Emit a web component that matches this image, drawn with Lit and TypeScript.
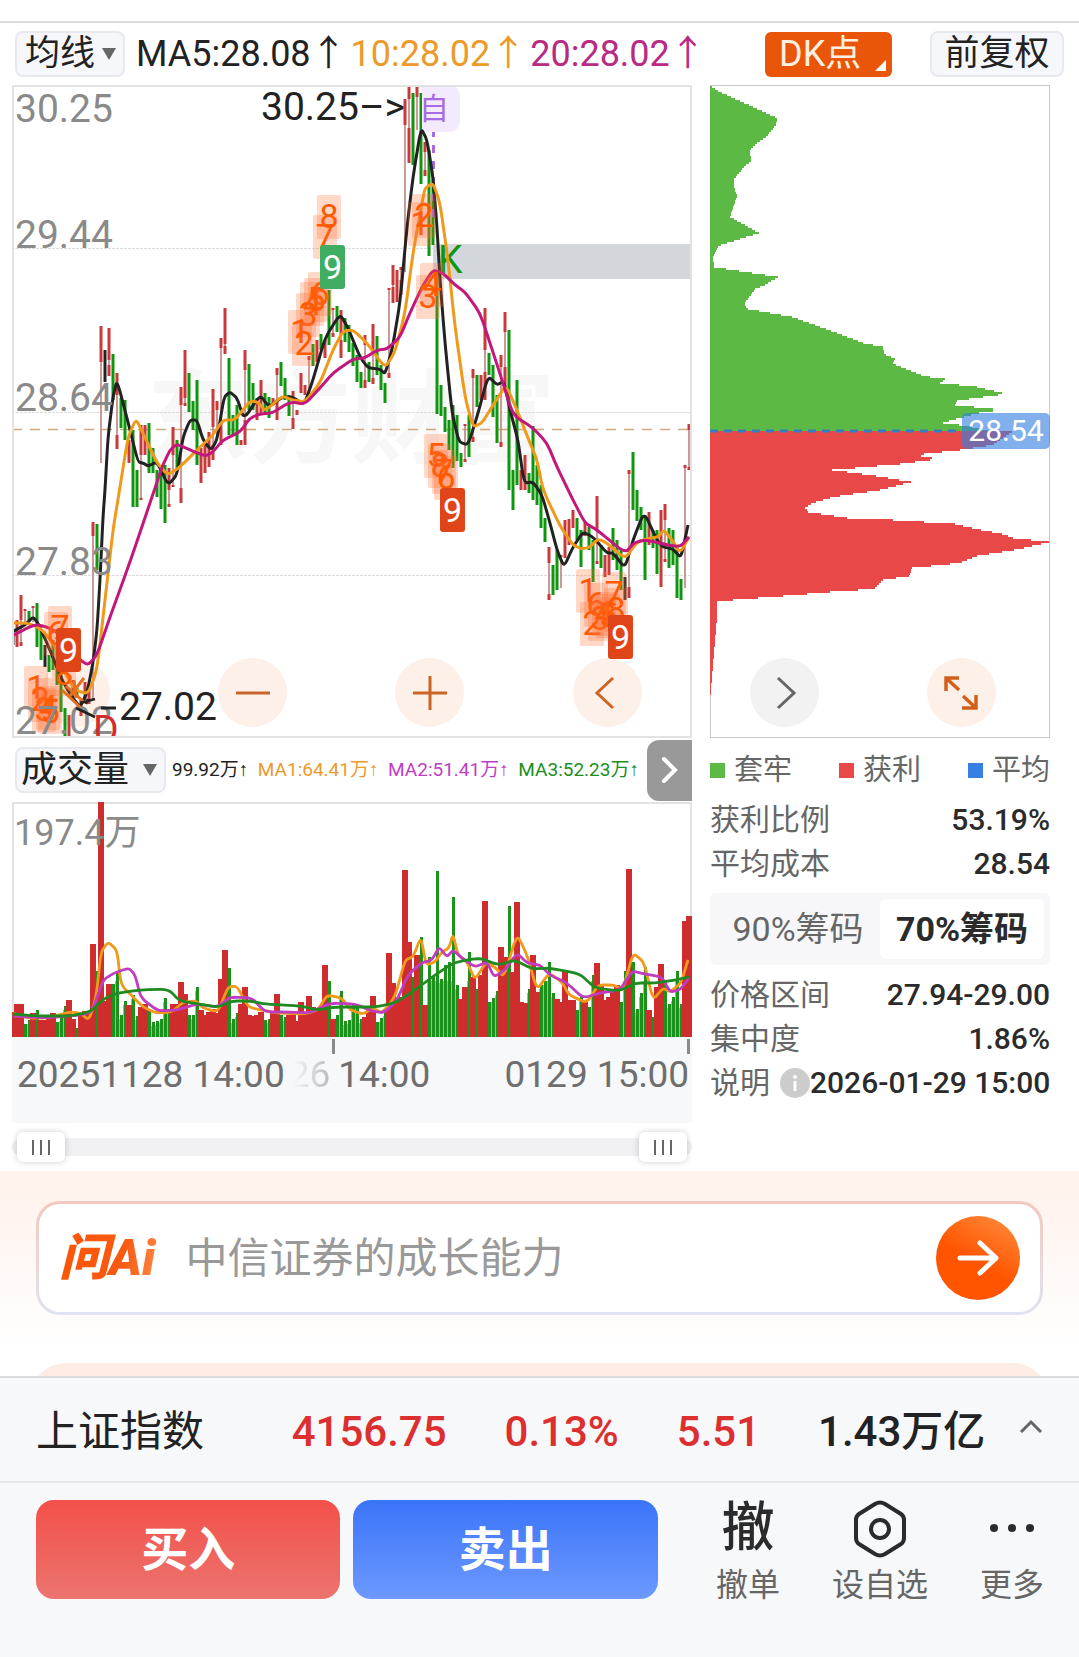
import { LitElement, html, svg, css } from "lit";
import { customElement, state } from "lit/decorators.js";

type Tone = "r" | "g" | "k";

/* x, body top, body bottom, tone, optional wick end, optional second body top */
const CANDLES: Array<[number, number, number, Tone, number?, number?]> = [
  [13, 630, 645, "k"], [17, 620, 647, "r"], [21, 595, 620, "r", 646, 642], [25, 609, 611, "r", 622],
  [29, 611, 620, "g"], [33, 606, 608, "r", 622], [37, 603, 647, "g"], [41, 630, 660, "g"],
  [45, 645, 667, "k"], [49, 655, 672, "g"], [53, 640, 670, "g"], [57, 650, 685, "g"],
  [61, 660, 712, "g"], [65, 708, 737, "g"], [69, 715, 738, "r"], [73, 680, 700, "r"], [77, 688, 696, "g"],
  [81, 700, 716, "r"], [85, 682, 700, "r"], [89, 690, 704, "r"], [93, 522, 536, "r", 700], [97, 524, 570, "g"],
  [101, 326, 362, "r", 463], [105, 350, 382, "k"], [109, 328, 360, "r", 376, 365], [113, 354, 400, "g"],
  [117, 373, 395, "r", 449, 435], [121, 398, 428, "g"], [125, 400, 440, "g"], [129, 440, 463, "r"],
  [133, 430, 507, "g"], [137, 470, 507, "g"], [141, 425, 455, "r", 500, 498], [145, 425, 455, "r"],
  [149, 423, 473, "g"], [153, 448, 473, "g"], [157, 470, 497, "g"], [161, 465, 509, "g"],
  [165, 465, 523, "g"], [169, 468, 490, "r", 507, 504], [173, 427, 455, "r", 487, 485], [177, 440, 470, "g"],
  [181, 387, 405, "r", 503, 488], [185, 350, 398, "r", 406, 403], [189, 373, 412, "g"], [193, 401, 430, "g"],
  [197, 380, 465, "g"], [201, 448, 483, "r"], [205, 445, 473, "r"], [209, 432, 467, "r"],
  [213, 389, 427, "r", 460, 445], [217, 401, 410, "r", 440], [221, 338, 348, "r", 445, 420],
  [225, 308, 344, "r", 354, 346], [229, 358, 435, "g"], [233, 415, 435, "g"], [237, 405, 445, "g"],
  [241, 440, 445, "r"], [245, 350, 370, "r", 445, 420], [249, 364, 410, "g"], [253, 383, 410, "g"],
  [257, 398, 420, "r"], [261, 380, 415, "r"], [265, 393, 415, "g"], [269, 397, 418, "g"],
  [273, 398, 405, "r"], [277, 368, 375, "r", 420, 400], [281, 362, 386, "g"], [285, 378, 400, "g"],
  [289, 395, 416, "g"], [293, 391, 400, "r", 429, 418], [297, 410, 415, "r"], [301, 373, 393, "r"],
  [305, 385, 395, "r"], [309, 356, 360, "r", 400], [313, 344, 366, "g"], [317, 340, 362, "r"],
  [321, 334, 350, "g"], [325, 340, 358, "r"], [329, 290, 345, "g"], [333, 308, 310, "r", 337, 333],
  [337, 306, 332, "g"], [341, 310, 335, "r", 358, 340], [345, 318, 342, "g"], [349, 325, 352, "g"],
  [353, 343, 366, "g"], [357, 355, 382, "g"], [361, 372, 388, "g"], [365, 335, 345, "r", 388, 380],
  [369, 362, 382, "g"], [373, 324, 352, "r", 384, 378], [377, 336, 375, "g"], [381, 365, 390, "g"],
  [385, 383, 403, "g"], [389, 288, 290, "r", 378, 373], [393, 265, 285, "r", 303, 287], [397, 270, 302, "r"],
  [401, 267, 270, "r", 295, 280], [405, 99, 125, "r", 272], [409, 85, 99, "r", 163, 128], [413, 93, 165, "g"],
  [417, 87, 97, "r", 130], [421, 93, 184, "g"], [425, 142, 152, "r", 176, 170], [429, 150, 256, "g"],
  [433, 180, 245, "g"], [437, 270, 414, "g"], [441, 385, 416, "g"], [445, 407, 432, "g"],
  [449, 420, 450, "g"], [453, 405, 468, "g"], [457, 415, 461, "g"], [461, 453, 467, "g"],
  [465, 424, 426, "r", 462, 459], [469, 415, 457, "g"], [473, 369, 378, "r", 442, 437], [477, 375, 407, "g"],
  [481, 375, 400, "r"], [485, 308, 350, "r", 400, 372], [489, 353, 375, "g"], [493, 365, 417, "g"],
  [497, 395, 443, "g"], [501, 355, 367, "r", 447, 442], [505, 312, 332, "r", 390, 367], [509, 330, 490, "g"],
  [513, 470, 510, "g"], [517, 380, 485, "g"], [521, 470, 490, "r"], [525, 455, 490, "r"],
  [529, 473, 493, "g"], [533, 426, 500, "g"], [537, 465, 505, "g"], [541, 485, 528, "g"],
  [545, 518, 542, "g"], [549, 547, 563, "r", 600, 594], [553, 565, 595, "g"], [557, 550, 590, "g"],
  [561, 555, 557, "r", 588], [565, 520, 558, "r"], [569, 519, 545, "r"], [573, 510, 528, "r"],
  [577, 518, 540, "g"], [581, 530, 567, "g"], [585, 522, 536, "r"], [589, 527, 550, "g"],
  [593, 540, 582, "g"], [597, 496, 530, "r", 564, 561], [601, 545, 568, "g"], [605, 555, 577, "r"],
  [609, 547, 575, "r"], [613, 528, 560, "g"], [617, 540, 570, "g"], [621, 550, 590, "g"],
  [625, 577, 600, "k"], [629, 470, 474, "r", 598, 587], [633, 452, 510, "g"], [637, 490, 521, "g"],
  [641, 507, 530, "g"], [645, 515, 580, "g"], [649, 512, 545, "r"], [653, 530, 548, "g"],
  [657, 530, 574, "g"], [661, 510, 587, "r"], [665, 504, 520, "r", 562, 559], [669, 528, 568, "g"],
  [673, 530, 565, "g"], [677, 545, 598, "g"], [681, 579, 600, "g"], [685, 465, 468, "r", 588],
  [689, 424, 430, "r", 470, 467],
];

const MA5: number[][] = [
  [12, 632], [25, 625], [33, 617], [38, 623], [50, 650], [62, 680], [72, 697], [80, 707], [87, 693], [93, 663],
  [97, 630], [100, 580], [103, 517], [105, 490], [108, 437], [113, 397], [117, 380], [128, 422], [138, 462],
  [143, 463], [148, 466], [157, 462], [168, 485], [177, 475], [183, 437], [190, 420], [197, 420], [203, 440],
  [211, 450], [217, 440], [224, 397], [230, 392], [237, 398], [244, 419], [260, 395], [269, 407], [282, 397],
  [293, 397], [304, 405], [313, 380], [325, 338], [340, 314], [348, 328], [360, 357], [368, 368], [380, 369],
  [385, 374], [392, 350], [400, 303], [407, 227], [413, 177], [421, 128], [427, 140], [433, 177], [437, 227],
  [440, 280], [445, 343], [452, 413], [459, 442], [468, 445], [477, 417], [488, 376], [497, 385], [504, 381],
  [510, 410], [518, 440], [524, 483], [533, 482], [542, 495], [550, 523], [557, 550], [564, 567], [573, 547],
  [583, 532], [593, 537], [607, 553], [613, 553], [625, 568], [633, 540], [644, 512], [657, 540], [663, 547],
  [673, 549], [681, 558], [688, 525],
];
const MA10: number[][] = [
  [12, 623], [27, 623], [40, 628], [55, 645], [62, 668], [75, 690], [88, 694], [97, 670], [105, 600], [113, 530],
  [120, 487], [128, 437], [136, 419], [143, 433], [157, 463], [168, 475], [180, 467], [197, 450], [213, 435],
  [223, 420], [235, 420], [250, 401], [258, 402], [265, 411], [282, 396], [293, 400], [305, 402], [320, 383],
  [333, 350], [343, 331], [353, 330], [367, 343], [385, 368], [395, 352], [405, 313], [413, 253], [422, 203],
  [425, 188], [433, 183], [440, 203], [448, 260], [455, 327], [465, 397], [473, 427], [482, 423], [495, 402],
  [506, 385], [517, 410], [530, 443], [537, 460], [543, 490], [560, 526], [573, 545], [582, 549], [590, 547],
  [598, 539], [607, 543], [625, 559], [637, 542], [650, 538], [658, 537], [664, 530], [672, 540], [680, 553],
  [689, 537],
];
const MA20: number[][] = [
  [12, 636], [35, 624], [50, 628], [68, 640], [80, 660], [88, 665], [97, 655], [110, 617], [130, 562], [152, 497],
  [162, 467], [170, 450], [177, 444], [190, 450], [205, 456], [212, 453], [223, 440], [240, 432], [250, 418],
  [260, 414], [272, 413], [290, 402], [305, 404], [320, 388], [333, 373], [353, 359], [365, 358], [377, 350],
  [387, 349], [400, 337], [410, 313], [422, 287], [433, 270], [443, 273], [455, 285], [465, 292], [480, 313],
  [490, 343], [502, 380], [513, 415], [533, 428], [547, 443], [557, 467], [573, 500], [585, 523], [597, 530],
  [625, 553], [635, 542], [647, 540], [663, 544], [680, 547], [689, 537],
];

/* digit, left, top of each sequence tag */
const TAGS: Array<[string, number, number]> = [
  ["7", 313, 215], ["8", 317, 195], ["6", 308, 272], ["5", 304, 278], ["4", 300, 282], ["3", 296, 293],
  ["1", 288, 310], ["2", 292, 322], ["1", 408, 202], ["2", 412, 194], ["3", 416, 275], ["4", 420, 263],
  ["5", 424, 434], ["8", 428, 444], ["7", 432, 450], ["6", 434, 456], ["6", 44, 612], ["7", 48, 606],
  ["1", 24, 666], ["2", 28, 678], ["3", 32, 688], ["4", 36, 686], ["5", 38, 690], ["8", 52, 652],
  ["1", 576, 569], ["6", 584, 583], ["2", 580, 602], ["3", 588, 597], ["4", 592, 592], ["5", 596, 594],
  ["7", 602, 572], ["8", 604, 588],
];
const NINES: Array<[number, number, string]> = [
  [320, 245, "#3fae62"], [440, 488, "#e0451a"], [56, 628, "#e0451a"], [608, 615, "#e0451a"],
];

const PROFILE_UP: number[][] = [
  [0, 1], [10, 7], [67, 33], [66, 40], [55, 53], [47, 58], [40, 65], [41, 76], [33, 83], [24, 94], [24, 102],
  [27, 111], [20, 132], [49, 148], [8, 161], [3, 172], [4, 182], [35, 187], [68, 192], [53, 201], [45, 204],
  [34, 219], [38, 224], [82, 232], [127, 248], [153, 258], [173, 262], [174, 269], [185, 274], [183, 279],
  [213, 291], [235, 294], [230, 298], [267, 302], [296, 309], [265, 313], [247, 316], [245, 320], [273, 323],
  [293, 325], [273, 327], [242, 335], [233, 338], [257, 341], [280, 346],
];
const PROFILE_DOWN: number[][] = [
  [303, 346], [283, 360], [250, 365], [205, 370], [227, 374], [190, 379], [122, 385], [160, 390], [201, 397],
  [170, 405], [123, 412], [103, 418], [95, 423], [98, 427], [143, 434], [183, 435], [245, 439], [266, 444],
  [292, 449], [303, 453], [339, 457], [310, 464], [267, 471], [250, 478], [202, 483], [199, 491], [173, 495],
  [164, 504], [132, 506], [73, 511], [23, 515], [7, 516], [7, 531], [2, 593], [0, 615],
];

const VOLUMES =
  "r25 r33 r33 g13 g17 r24 g27 r17 r17 r20 r24 g15 g20 g31 r37 r18 g9 r22 r26 r25 r93 g66 r235 r36 r53 g53 g64 g22 g36 r32 " +
  "g42 g21 r30 r33 g26 g15 g16 g18 g39 g28 r33 r33 r55 r43 g22 g22 g50 r27 r22 r25 r28 r24 r58 r87 g69 g18 g24 r33 r50 r22 " +
  "r21 r22 r25 g17 g18 r24 r43 g22 g20 r22 r24 r16 r35 r25 r41 r30 r28 r30 r72 g56 r18 g22 g46 g16 g17 g34 g33 g18 r20 r30 " +
  "r41 g15 g19 g25 r84 r54 r36 r40 r167 r95 g60 r82 g100 r32 g80 g60 g166 g58 g72 g75 g140 g52 r38 r50 g85 r60 g48 r62 r136 g35 " +
  "g39 g46 r90 r80 g131 r65 r135 r35 r34 g48 r82 r45 g52 g56 g75 g44 r38 r35 r67 r37 r37 g27 g42 r35 g30 g62 r74 r52 r37 r40 " +
  "r45 r52 g35 g66 r168 g75 g28 g44 g70 r27 g20 r50 r73 g56 g33 g40 g66 g33 r116 r121";

const VMA1: number[][] = [
  [13, 1013], [27, 1018], [49, 1018], [69, 1012], [80, 1013], [89, 1020], [96, 998], [101, 952], [108, 942],
  [117, 950], [121, 985], [134, 998], [143, 1007], [156, 1013], [172, 1012], [183, 1002], [196, 1001], [203, 1008],
  [218, 1012], [228, 987], [237, 986], [248, 1007], [261, 1010], [277, 1013], [304, 1014], [318, 1010], [327, 995],
  [342, 998], [350, 1010], [363, 1014], [373, 1008], [382, 1013], [395, 997], [405, 960], [413, 957], [421, 937],
  [426, 965], [435, 962], [442, 952], [449, 948], [453, 934], [458, 955], [467, 962], [475, 980], [486, 962],
  [496, 968], [504, 977], [517, 934], [527, 955], [537, 990], [549, 973], [562, 982], [569, 995], [587, 1003],
  [598, 985], [614, 985], [623, 990], [633, 953], [644, 962], [653, 1000], [663, 988], [670, 992], [681, 983],
  [688, 960],
];
const VMA2: number[][] = [
  [13, 1016], [45, 1018], [80, 1015], [92, 1012], [103, 980], [114, 973], [129, 968], [135, 975], [141, 998],
  [158, 1011], [178, 1010], [196, 1004], [218, 1007], [230, 997], [252, 998], [265, 1012], [290, 1012], [310, 1013],
  [330, 1003], [355, 1004], [372, 1011], [384, 1013], [397, 1000], [408, 975], [421, 963], [432, 960], [439, 947],
  [447, 957], [453, 950], [462, 958], [475, 967], [487, 962], [494, 977], [505, 970], [517, 953], [527, 963],
  [540, 965], [550, 975], [567, 983], [583, 998], [600, 993], [620, 990], [632, 971], [645, 974], [662, 977],
  [670, 992], [680, 990], [689, 978],
];
const VMA3: number[][] = [
  [13, 1014], [35, 1016], [70, 1016], [90, 1012], [105, 998], [118, 993], [140, 990], [168, 989], [180, 1001],
  [205, 1005], [218, 1007], [232, 1001], [250, 1001], [265, 1004], [300, 1006], [318, 1010], [335, 1007],
  [375, 1007], [395, 1003], [415, 990], [435, 975], [455, 962], [480, 958], [498, 965], [515, 960], [532, 969],
  [550, 968], [580, 974], [595, 988], [620, 991], [635, 983], [655, 983], [675, 980], [689, 977],
];

/* Rounds the corners of a polyline by running a quadratic through each vertex. */
function smooth(points: number[][]): string {
  let d = `M${points[0][0]} ${points[0][1]}`;
  for (let i = 1; i < points.length - 1; i++) {
    const [x, y] = points[i];
    const [px, py] = points[i - 1];
    const [nx, ny] = points[i + 1];
    d += `L${x - (x - px) * 0.3} ${y - (y - py) * 0.3}Q${x} ${y} ${x + (nx - x) * 0.3} ${y + (ny - y) * 0.3}`;
  }
  const last = points[points.length - 1];
  return d + `L${last[0]} ${last[1]}`;
}

/* Steps a profile into horizontal slices of two units. */
function stepped(points: number[][]): string {
  const first = points[0][1];
  const end = points[points.length - 1][1];
  let d = `M0 ${first}`;
  let k = 0;
  for (let y = first; y < end; y += 2) {
    while (k < points.length - 2 && points[k + 1][1] < y + 1) k++;
    const [x0, y0] = points[k];
    const [x1, y1] = points[k + 1];
    const t = y1 === y0 ? 1 : Math.min(1, Math.max(0, (y + 1 - y0) / (y1 - y0)));
    d += `H${Math.round(x0 + (x1 - x0) * t)}V${Math.min(y + 2, end)}`;
  }
  return d + "H0Z";
}

const TONES: Record<Tone, string> = { r: "#c8393b", g: "#0f960f", k: "#222222" };

@customElement("price-chart")
class PriceChart extends LitElement {
  static styles = css`
    :host { display: block; }
    svg { display: block; width: 100%; height: auto; overflow: hidden; }
    .label { font: 39px Roboto, "Noto Sans CJK SC", sans-serif; fill: #8a8a8a; }
    .note { font: 39px Roboto, "Noto Sans CJK SC", sans-serif; fill: #222; }
    .tag { font: 34px Roboto, sans-serif; fill: #ff5a00; text-anchor: middle; }
    .nine { font: 34px Roboto, sans-serif; fill: #fff; text-anchor: middle; }
    .mark { font: bold 102px "Noto Sans CJK SC", sans-serif; fill: #f7f7f7; }
    .self { font: 30px "Noto Sans CJK SC", sans-serif; fill: #a86ae0; }
    .k { font: 39px Roboto, sans-serif; fill: #0f960f; }
    .d { font: 39px Roboto, sans-serif; fill: #d22c2c; }
  `;
  render() {
    return html`<svg viewBox="12 85 680 653" role="img" aria-label="均线">
      <text class="mark" x="147" y="455">东方财富</text>
      <g stroke="#dddddd" stroke-dasharray="3 1">
        <path d="M12 248.5H692M12 412.5H692M12 575.5H692" />
      </g>
      <path d="M12 429.5H692" stroke="#d0ab80" stroke-width="1.5" stroke-dasharray="10 8" />
      <rect x="433" y="244" width="259" height="35" fill="#d3d6db" />
      ${CANDLES.map(([x, top, bottom, tone, wick, second]) => svg`
        ${wick ? svg`<path d="M${x} ${top}V${wick}" stroke="#c08080" stroke-width="1.6" />` : ""}
        <path d="M${x} ${top}V${bottom}" stroke=${TONES[tone]} stroke-width="3" />
        ${second && wick ? svg`<path d="M${x} ${second}V${wick}" stroke=${TONES[tone]} stroke-width="3" />` : ""}`)}
      <path d="M433.500 132V217" stroke="#a86ae0" stroke-width="3" stroke-dasharray="8 8" stroke-dashoffset="3" />
      <path d="M422 85H448Q460 85 460 98V120Q460 132 448 132H422Z" fill="#f3eafd" />
      <text class="self" x="419" y="119">自</text>
      <text class="k" x="438" y="273">K</text>
      <g fill="none" stroke-width="3" stroke-linejoin="round">
        <path d=${smooth(MA5)} stroke="#222222" />
        <path d=${smooth(MA10)} stroke="#f09a1c" />
        <path d=${smooth(MA20)} stroke="#c2187c" />
      </g>
      <text class="label" x="15" y="122">30.25</text>
      <text class="label" x="15" y="248">29.44</text>
      <text class="label" x="15" y="411">28.64</text>
      <text class="label" x="15" y="575">27.83</text>
      ${TAGS.map(([digit, x, y]) => svg`
        <rect x=${x} y=${y} width="24" height="44" rx="2" fill="#ff6a2a" fill-opacity="0.26" />
        <text class="tag" x=${x + 12} y=${y + 33}>${digit}</text>`)}
      <text class="label" x="15" y="734">27.02</text>
      <g fill="none" stroke="#e2701e" stroke-width="3">
        <path d="M62 690L80 707M66 686L84 702M70 696L84 678M76 698L74 680" />
      </g>
      <path d="M76 708L95 717M80 703L95 699M88 699L86 704" stroke="#222222" stroke-width="2.600" fill="none" />
      ${NINES.map(([x, y, fill]) => svg`
        <rect x=${x} y=${y} width="25" height="44" rx="3" fill=${fill} />
        <text class="nine" x=${x + 12.5} y=${y + 34}>9</text>`)}
      <text class="d" x="93" y="743">D</text>
      <path d="M101 708H116" stroke="#222222" stroke-width="3" />
      <text class="note" x="119" y="720">27.02</text>
      <text class="note" x="261" y="120">30.25–&gt;</text>
      <rect x="13" y="86" width="678" height="651" fill="none" stroke="#e2e2e2" stroke-width="2" />
    </svg>`;
  }
}

@customElement("cost-profile")
class CostProfile extends LitElement {
  static styles = css`
    :host { display: block; }
    svg { display: block; width: 100%; height: auto; }
    .price { font: 30px Roboto, sans-serif; fill: #fff; text-anchor: middle; }
  `;
  render() {
    return html`<svg viewBox="0 0 340 653" role="img" aria-label="筹码">
      <rect x="0.500" y="0.500" width="339" height="652" fill="none" stroke="#c8c8c8" />
      <path d=${stepped(PROFILE_UP)} fill="#5bb944" />
      <path d=${stepped(PROFILE_DOWN)} fill="#e94848" />
      <path d="M0 346H252" stroke="#3a7cc0" stroke-width="3" stroke-dasharray="8 6" />
      <rect x="252" y="328" width="88" height="36" rx="5" fill="#3580e2" fill-opacity="0.620" />
      <text class="price" x="296" y="356">28.54</text>
    </svg>`;
  }
}

@customElement("volume-chart")
class VolumeChart extends LitElement {
  static styles = css`
    :host { display: block; }
    svg { display: block; width: 100%; height: auto; }
    .label { font: 36px Roboto, "Noto Sans CJK SC", sans-serif; fill: #8a8a8a; }
  `;
  render() {
    const bars = VOLUMES.split(" ").map((entry, i) => ({ red: entry[0] === "r", h: Number(entry.slice(1)), x: 13 + i * 4 }));
    return html`<svg viewBox="12 802 680 235" role="img" aria-label="成交量">
      <rect x="13" y="803" width="678" height="240" fill="none" stroke="#e2e2e2" stroke-width="2" />
      ${bars.map((bar) => (bar.red ? "" : svg`<rect x=${bar.x - 2} y=${1037 - Math.min(bar.h, 60) + 4} width="4" height=${Math.min(bar.h, 60) - 4} fill="#7fcf7f" />`))}
      ${bars.map((bar) => (bar.red
        ? svg`<rect x=${bar.x - 3} y=${1037 - bar.h} width="6" height=${bar.h} fill="#cf2d2d" />`
        : svg`<rect x=${bar.x - 1} y=${1037 - bar.h} width="3" height=${bar.h} fill="#1c921c" />`))}
      <g fill="none" stroke-width="2.800" stroke-linejoin="round">
        <path d=${smooth(VMA1)} stroke="#f09a1c" />
        <path d=${smooth(VMA2)} stroke="#c03cc0" />
        <path d=${smooth(VMA3)} stroke="#1f8a1f" />
      </g>
      <text class="label" x="14" y="845">197.4万</text>
    </svg>`;
  }
}

@customElement("app-root")
class AppRoot extends LitElement {
  @state() private range = "70";

  static styles = css`
    :host { display: block; background: #fff; color: #222; font-family: Roboto, "Noto Sans CJK SC", sans-serif; }
    * { box-sizing: border-box; }
    button { font: inherit; color: inherit; border: 0; padding: 0; background: none; cursor: pointer; }
    svg { display: block; }
    .header { margin-top: 21px; border-top: 2px solid #dcdcdc; height: 64px; padding: 0 15px; display: flex; align-items: center; font-size: 36px; white-space: nowrap; }
    .pick { position: relative; display: flex; align-items: center; flex: none; }
    .pick select { appearance: none; font: inherit; color: inherit; font-size: 35px; height: 46px; padding: 0 0 0 8px; background: #f6f7fa; border: 2px solid #e8e9ee; border-radius: 8px; line-height: 42px; }
    .pick.ma select { width: 110px; }
    .pick.vol select { width: 151px; padding-left: 4px; font-size: 36px; }
    .pick svg { position: absolute; right: 9px; pointer-events: none; }
    .averages { display: flex; gap: 4px; margin-left: 11px; padding-bottom: 8px; flex: 1; }
    .orange { color: #eb9a2b; }
    .magenta { color: #b82a83; }
    .violet { color: #c03cc8; }
    .green { color: #1b8f1b; }
    .dk { position: relative; width: 127px; height: 45px; border-radius: 6px; background: #e9560a; color: #fff0e0; font-size: 36px; line-height: 44px; text-align: left; padding-left: 14px; }
    .dk svg { position: absolute; right: 6px; bottom: 6px; }
    .adjust { width: 134px; height: 46px; margin-left: 38px; border-radius: 8px; background: #f6f7fa; border: 2px solid #e8e9ee; font-size: 35px; line-height: 40px; }
    .charts { position: relative; display: grid; grid-template-columns: minmax(0, 2fr) minmax(0, 1fr); column-gap: 18px; padding: 0 29px 0 12px; }
    .price { position: relative; z-index: 1; pointer-events: none; }
    .tools { position: absolute; left: 41px; right: 83px; bottom: 11px; display: flex; justify-content: space-between; }
    .tool { width: 69px; height: 69px; border-radius: 50%; background: #fdf0e9; display: grid; place-items: center; }
    .tool.muted { background: #f2f2f2; }
    .panels { display: grid; grid-template-columns: minmax(0, 2fr) minmax(0, 1fr); column-gap: 18px; padding: 0 29px 0 12px; }
    .volhead { display: flex; align-items: center; height: 64px; padding: 2px 0 2px 3px; white-space: nowrap; }
    .sums { display: flex; flex: 1; min-width: 0; justify-content: space-between; padding: 0 8px 0 6px; font-family: Roboto, "Liberation Sans", "Noto Sans CJK SC", sans-serif; font-size: 19px; line-height: 46px; }
    .next { width: 45px; height: 61px; background: #999; border-radius: 12px 0 0 12px; display: grid; place-items: center; flex: none; }
    .axis { position: relative; display: flex; justify-content: space-between; height: 86px; padding: 18px 3px 0 5px; background: #f7f8fa; color: #6e6e6e; font-size: 37px; line-height: 40px; white-space: nowrap; }
    .tick { position: absolute; top: 2px; width: 3px; height: 15px; background: #8a8a8a; }
    .tick.mid { left: 47%; }
    .tick.end { right: 2px; }
    .times { display: flex; gap: 4px; }
    .cut { display: flex; gap: 8px; }
    .fade { background: linear-gradient(90deg, #f7f8fa 10%, #bbb); background-clip: text; color: transparent; }
    .slider { position: relative; height: 48px; display: flex; align-items: center; }
    .slider::before { content: ""; width: 100%; height: 18px; border-radius: 9px; background: #f0f0f3; }
    .slider input { appearance: none; position: absolute; left: 5px; width: calc(100% - 10px); height: 30px; margin: 0; background: none; pointer-events: none; }
    .slider input::-webkit-slider-thumb { appearance: none; pointer-events: auto; width: 48px; height: 30px; border-radius: 6px; box-shadow: 0 0 6px #0003; background: linear-gradient(#666, #666) 15px 8px / 2px 15px no-repeat, linear-gradient(#666, #666) 23px 8px / 2px 15px no-repeat, linear-gradient(#666, #666) 31px 8px / 2px 15px no-repeat, #fff; }
    .info { font-size: 30px; color: #666; }
    .legend { display: flex; justify-content: space-between; height: 60px; align-items: center; line-height: 54px; padding-top: 4px; }
    .legend span { display: flex; align-items: center; gap: 9px; font-size: 29px; }
    .swatch { width: 15px; height: 15px; }
    .s1 { background: #5bb944; }
    .s2 { background: #e94848; }
    .s3 { background: #3580e2; }
    .row { display: flex; align-items: center; height: 44px; white-space: nowrap; margin: 0; }
    .row dt { display: flex; align-items: center; gap: 10px; flex: 1; line-height: 44px; }
    .row dd { margin: 0; color: #2b2b2b; font-weight: 500; font-size: 30px; line-height: 44px; }
    dl { margin: 0; }
    .switch { display: grid; grid-template-columns: 1fr 1fr; height: 72px; margin: 7px 0 8px; padding: 6px; background: #f7f7fa; border-radius: 6px; }
    .switch button { border-radius: 6px; font-size: 34px; line-height: 60px; white-space: nowrap; }
    .switch .on { background: #fff; color: #2b2b2b; font-weight: 700; }
    .ask { height: 205px; padding: 30px 36px 0; background: linear-gradient(#fff1eb, #fff 88%); position: relative; overflow: hidden; }
    .card { display: flex; align-items: center; height: 114px; padding: 0 20px; border: 3px solid transparent; border-radius: 24px; background: linear-gradient(#fff, #fff) padding-box, linear-gradient(#f2c8bf, #dfe4ef) border-box; }
    .logo { font-weight: 900; font-style: italic; font-size: 50px; line-height: 60px; background: linear-gradient(100deg, #fb5607, #f85a10 60%, #ff9050); background-clip: text; color: transparent; padding-right: 8px; }
    .card input { flex: 1; min-width: 0; border: 0; outline: 0; background: none; font: inherit; font-size: 42px; height: 70px; padding: 0; margin-left: 22px; color: #333; }
    .card input::placeholder { color: #999; opacity: 1; }
    .go { width: 84px; height: 84px; border-radius: 50%; background: linear-gradient(30deg, #ff5400 45%, #ff9040); display: grid; place-items: center; }
    .sheet { height: 60px; margin: 48px -6px 0; border-radius: 36px 36px 0 0; background: #fcece3; }
    .dock { background: #f7f8fa; border-top: 2px solid #dadada; }
    .index { display: flex; align-items: center; justify-content: space-between; height: 105px; padding: 0 36px 5px; border-bottom: 2px solid #e6e7ea; font-size: 42px; white-space: nowrap; }
    .quotes { display: flex; align-items: baseline; gap: 58px; margin-left: 54px; }
    .quotes strong { font-weight: 500; }
    .up { color: #dc2f2f; }
    .trade { display: flex; align-items: flex-start; padding: 17px 35px 52px 36px; }
    .deal { flex: 1; height: 99px; border-radius: 18px; color: #fff; font-size: 47px; font-weight: 700; line-height: 96px; }
    .buy { background: linear-gradient(#f35049, #ec746f); margin-right: 13px; }
    .sell { background: linear-gradient(#3a74f8, #6d99ff); }
    .act { margin-left: 52px; font-size: 32px; color: #666; display: flex; flex-direction: column; align-items: center; line-height: 40px; gap: 9px; white-space: nowrap; }
    .act.first { margin-left: 58px; }
    .glyph { height: 56px; display: grid; place-items: center; color: #2b2b2b; font-size: 53px; font-weight: 500; line-height: 56px; }
  `;

  private triangle(size: number) {
    return html`<svg width=${size} height="14" viewBox="0 0 14 14" preserveAspectRatio="none"><path d="M0 1H14L7 13Z" fill="#666" /></svg>`;
  }

  render() {
    return html`
      <header class="header">
        <label class="pick ma"><select aria-label="均线"><option>均线</option></select>${this.triangle(14)}</label>
        <div class="averages">
          <span>MA5:28.08↑</span><span class="orange">10:28.02↑</span><span class="magenta">20:28.02↑</span>
        </div>
        <button class="dk">DK点<svg width="11" height="11" viewBox="0 0 11 11"><path d="M11 0V11H0Z" fill="#fff" /></svg></button>
        <button class="adjust">前复权</button>
      </header>

      <section class="charts">
        <price-chart class="price"></price-chart>
        <cost-profile></cost-profile>
        <div class="tools">
          <button class="tool" aria-label="画线"></button>
          <button class="tool" aria-label="缩小"><svg width="34" height="34"><path d="M0 17H34" stroke="#c9652c" stroke-width="3" /></svg></button>
          <button class="tool" aria-label="放大"><svg width="34" height="34"><path d="M0 17H34M17 0V34" stroke="#cc6425" stroke-width="3" /></svg></button>
          <button class="tool" aria-label="左移"><svg width="34" height="34"><path d="M23 2L7 17L23 32" fill="none" stroke="#cc6425" stroke-width="3" /></svg></button>
          <button class="tool muted" aria-label="右移"><svg width="34" height="34"><path d="M11 2L27 17L11 32" fill="none" stroke="#666" stroke-width="3" /></svg></button>
          <button class="tool" aria-label="全屏"><svg width="34" height="34"><path d="M15 2H2V15M2 2L15 14M32 19V32H18M32 32L19 20" fill="none" stroke="#d2601c" stroke-width="3.500" /></svg></button>
        </div>
      </section>

      <section class="panels">
        <div>
          <div class="volhead">
            <label class="pick vol"><select aria-label="成交量"><option>成交量</option></select>${this.triangle(14)}</label>
            <div class="sums">
              <span>99.92万↑</span><span class="orange">MA1:64.41万↑</span><span class="violet">MA2:51.41万↑</span><span class="green">MA3:52.23万↑</span>
            </div>
            <button class="next" aria-label="下一个"><svg width="18" height="28"><path d="M3 3L14 14L3 25" fill="none" stroke="#fff" stroke-width="4" stroke-linecap="round" /></svg></button>
          </div>
          <volume-chart></volume-chart>
          <div class="axis">
            <i class="tick mid"></i><i class="tick end"></i>
            <div class="times"><span>20251128 14:00</span><div class="cut"><span class="fade">26</span><span>14:00</span></div></div>
            <span>0129 15:00</span>
          </div>
          <div class="slider">
            <input type="range" aria-label="开始" min="0" max="100" value="0" />
            <input type="range" aria-label="结束" min="0" max="100" value="100" />
          </div>
        </div>
        <div class="info">
          <div class="legend">
            <span><i class="swatch s1"></i>套牢</span><span><i class="swatch s2"></i>获利</span><span><i class="swatch s3"></i>平均</span>
          </div>
          <dl>
            <div class="row"><dt>获利比例</dt><dd>53.19%</dd></div>
            <div class="row"><dt>平均成本</dt><dd>28.54</dd></div>
          </dl>
          <div class="switch">
            ${["90", "70"].map((v) => html`<button class=${this.range === v ? "on" : ""} aria-pressed=${this.range === v} @click=${() => (this.range = v)}>${v}%筹码</button>`)}
          </div>
          <dl>
            <div class="row"><dt>价格区间</dt><dd>27.94-29.00</dd></div>
            <div class="row"><dt>集中度</dt><dd>1.86%</dd></div>
            <div class="row"><dt>说明<svg width="30" height="30"><circle cx="15" cy="15" r="15" fill="#ccc" /><circle cx="15" cy="9" r="2" fill="#fff" /><path d="M15 13V23" stroke="#fff" stroke-width="3" /></svg></dt><dd>2026-01-29 15:00</dd></div>
          </dl>
        </div>
      </section>

      <section class="ask">
        <div class="card">
          <span class="logo">问Ai</span>
          <input type="text" aria-label="问Ai" placeholder="中信证券的成长能力" />
          <button class="go" aria-label="发送"><svg width="42" height="36"><path d="M3 18H38M23 3L39 18L23 33" fill="none" stroke="#fff" stroke-width="5" stroke-linecap="round" stroke-linejoin="round" /></svg></button>
        </div>
        <div class="sheet"></div>
      </section>

      <footer class="dock">
        <div class="index">
          <span>上证指数</span>
          <div class="quotes"><strong class="up">4156.75</strong><strong class="up">0.13%</strong><strong class="up">5.51</strong><strong>1.43万亿</strong></div>
          <button aria-label="展开"><svg width="24" height="16"><path d="M2 13L12 3L22 13" fill="none" stroke="#666" stroke-width="3" /></svg></button>
        </div>
        <div class="trade">
          <button class="deal buy">买入</button>
          <button class="deal sell">卖出</button>
          <button class="act first"><span class="glyph">撤</span>撤单</button>
          <button class="act"><span class="glyph"><svg width="54" height="58" viewBox="0 0 54 58" fill="none" stroke="#2b2b2b" stroke-width="4"><path d="M22 4Q27 1 32 4L48 14Q51 16 51 20V38Q51 42 48 44L32 54Q27 57 22 54L6 44Q3 42 3 38V20Q3 16 6 14Z" /><circle cx="27" cy="29" r="9" /></svg></span>设自选</button>
          <button class="act"><span class="glyph"><svg width="46" height="10" fill="#2b2b2b"><circle cx="5" cy="5" r="4" /><circle cx="23" cy="5" r="4" /><circle cx="41" cy="5" r="4" /></svg></span>更多</button>
        </div>
      </footer>
    `;
  }
}
